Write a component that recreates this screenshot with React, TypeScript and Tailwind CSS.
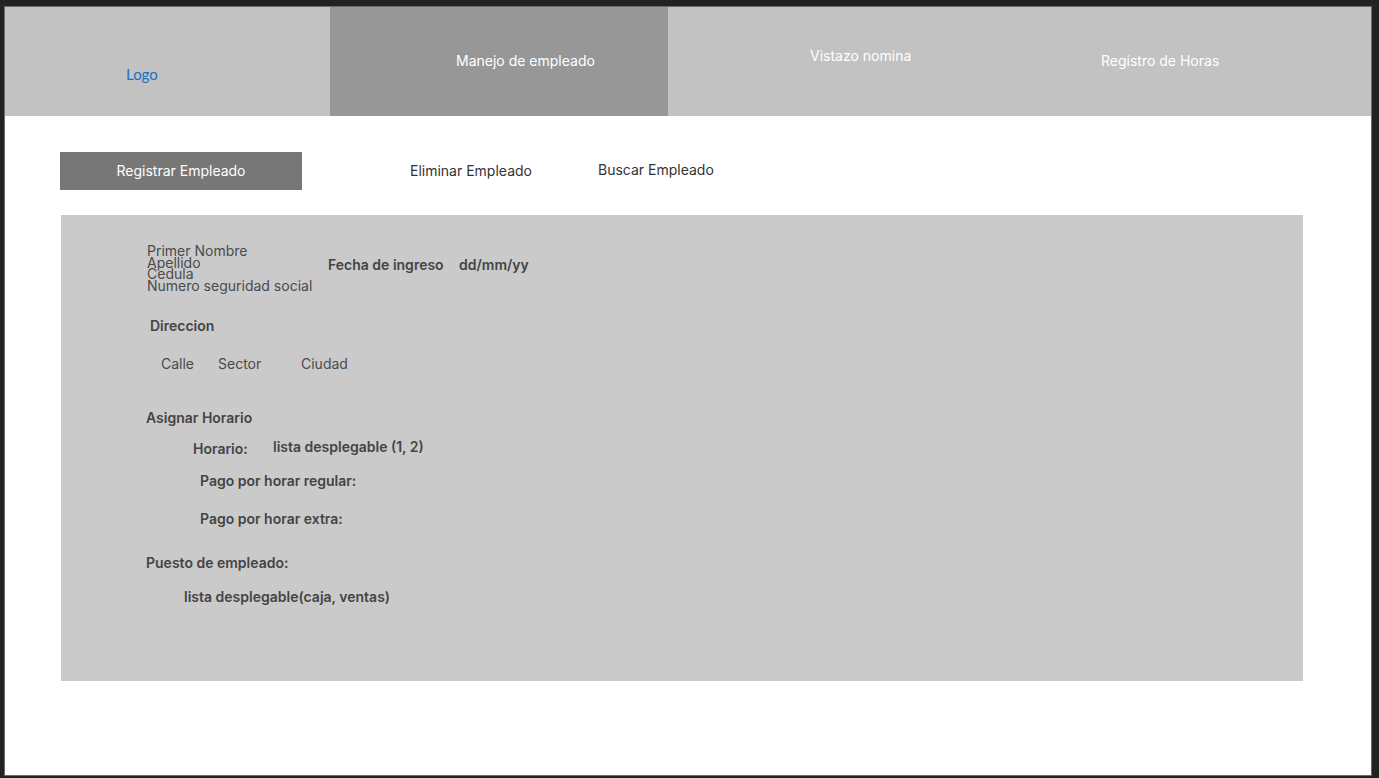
import React from 'react';

const FONT = "font-['Inter','Noto_Sans',sans-serif]";

function TopNav() {
  return (
    <header className="flex h-[109px] text-[14px] text-white">
      <div className="w-[325px] bg-[#c2c2c2] pl-[121px] pt-[57px]">
        <span className="font-['Lato',sans-serif] text-[15px] leading-5 text-[#1b6fc4]">
          Logo
        </span>
      </div>
      <div className="w-[338px] bg-[#979797] pl-[126px] pt-[44px] leading-5">
        Manejo de empleado
      </div>
      <div className="flex flex-1 bg-[#c2c2c2] leading-5">
        <div className="w-[433px] pl-[142px] pt-[39px]">Vistazo nomina</div>
        <div className="pt-[44px]">Registro de Horas</div>
      </div>
    </header>
  );
}

function SubTabs() {
  return (
    <nav className="ml-[55px] mt-[36px] flex items-center text-[14px] leading-5 text-[#333]">
      <div className="flex h-[38px] w-[242px] items-center justify-center bg-[#777777] text-white">
        Registrar Empleado
      </div>
      <div className="ml-[108px] w-[188px]">Eliminar Empleado</div>
      <div className="-mt-[2px]">Buscar Empleado</div>
    </nav>
  );
}

function FormPanel() {
  return (
    <section className="ml-[56px] mt-[25px] h-[466px] w-[1242px] bg-[#cacaca] text-[14px] text-[#4a4a4a]">
      <div className="flex items-start pl-[86px] pt-[30px]">
        <div className="w-[181px] leading-[11.5px]">
          <div>Primer Nombre</div>
          <div>Apellido</div>
          <div>Cedula</div>
          <div>Numero seguridad social</div>
        </div>
        <div className="mt-[10px] w-[131px] font-semibold leading-5 text-[#444]">
          Fecha de ingreso
        </div>
        <div className="mt-[10px] font-semibold leading-5 text-[#444]">dd/mm/yy</div>
      </div>

      <div className="ml-[89px] mt-[25px] font-semibold leading-5 text-[#444]">Direccion</div>

      <div className="ml-[100px] mt-[18px] flex leading-5">
        <span className="w-[57px]">Calle</span>
        <span className="w-[83px]">Sector</span>
        <span>Ciudad</span>
      </div>

      <div className="font-semibold leading-5 text-[#444]">
        <div className="ml-[85px] mt-[34px]">Asignar Horario</div>
        <div className="ml-[132px] mt-[9px] flex items-start">
          <span className="w-[80px] pt-[2px]">Horario:</span>
          <span>lista desplegable (1, 2)</span>
        </div>
        <div className="ml-[139px] mt-[12px]">Pago por horar regular:</div>
        <div className="ml-[139px] mt-[18px]">Pago por horar extra:</div>
        <div className="ml-[85px] mt-[24px]">Puesto de empleado:</div>
        <div className="ml-[123px] mt-[14px]">lista desplegable(caja, ventas)</div>
      </div>
    </section>
  );
}

export default function App() {
  return (
    <div className={`h-[778px] w-[1379px] overflow-hidden bg-[#222222] pl-[4px] pt-[6px] ${FONT}`}>
      <div className="h-[770px] w-[1368px] border border-[#6b6b6b] bg-white">
        <TopNav />
        <SubTabs />
        <FormPanel />
      </div>
    </div>
  );
}
